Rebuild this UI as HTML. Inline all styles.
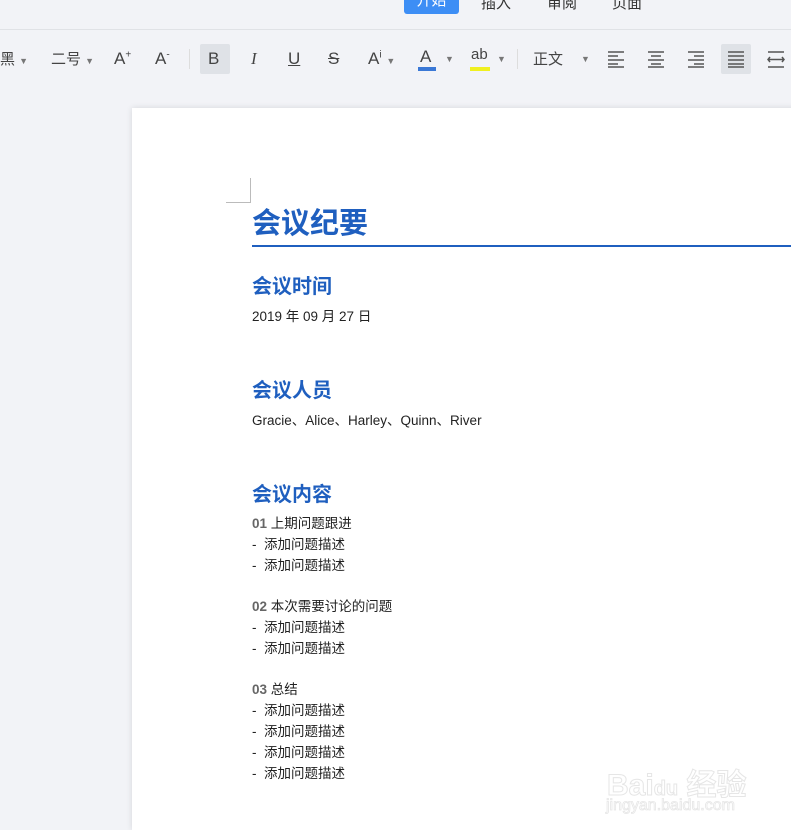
<!DOCTYPE html>
<html><head><meta charset="utf-8"><style>
*{margin:0;padding:0;box-sizing:border-box}
html,body{width:791px;height:830px;overflow:hidden}
body{background:#f2f3f7;position:relative;font-family:"Liberation Sans","Noto Sans CJK SC",sans-serif;color:#333}
.a{position:absolute;white-space:nowrap}
.tab{top:-8px;font-size:15px;color:#333}
.tb{top:44px;font-size:17px;color:#444}
.hl{background:#dfe2e7;border-radius:2px}
.page{position:absolute;left:132px;top:108px;width:700px;height:722px;background:#fff;box-shadow:0 0 6px rgba(0,0,0,.12)}
.h{color:#1f5fbf;font-weight:bold;font-size:20px}
.t{font-size:13.5px;color:#222}
.n{font-weight:bold;color:#666}
.car{font-size:9px;color:#777}
</style></head><body>
<div class="a" style="left:404px;top:-6px;width:55px;height:20px;background:#3d8ef5;border-radius:3px;color:#fff;font-size:15px;text-align:center;line-height:14px">开始</div>
<div class="a tab" style="left:481px">插入</div>
<div class="a tab" style="left:547px">审阅</div>
<div class="a tab" style="left:612px">页面</div>
<div class="a" style="left:0;top:29px;width:791px;height:1px;background:#e0e2e6"></div>

<div class="a tb" style="left:0;top:48px;font-size:15px">黑 <span class="car">▼</span></div>
<div class="a tb" style="left:51px;top:48px;font-size:15px">二号 <span class="car">▼</span></div>
<div class="a tb" style="left:114px;top:49px">A<sup style="font-size:10px">+</sup></div>
<div class="a tb" style="left:155px;top:49px">A<sup style="font-size:10px">-</sup></div>
<div class="a" style="left:189px;top:49px;width:1px;height:20px;background:#ddd"></div>
<div class="a hl" style="left:200px;top:44px;width:30px;height:30px"></div>
<div class="a tb" style="left:208px;top:49px">B</div>
<div class="a tb" style="left:251px;top:49px;font-style:italic;font-family:'Liberation Serif',serif">I</div>
<div class="a tb" style="left:288px;top:49px;text-decoration:underline">U</div>
<div class="a tb" style="left:328px;top:49px;text-decoration:line-through">S</div>
<div class="a tb" style="left:368px;top:49px">A<sup style="font-size:10px">i</sup> <span class="car">▼</span></div>
<div class="a tb" style="left:420px;top:47px">A</div>
<div class="a" style="left:418px;top:67px;width:18px;height:4px;background:#3a78d6"></div>
<div class="a car" style="left:445px;top:54px">▼</div>
<div class="a tb" style="left:471px;top:46px;font-size:15px">ab</div>
<div class="a" style="left:470px;top:67px;width:20px;height:4px;background:#f0f020"></div>
<div class="a car" style="left:497px;top:54px">▼</div>
<div class="a" style="left:517px;top:49px;width:1px;height:20px;background:#ddd"></div>
<div class="a tb" style="left:533px;top:48px;font-size:15px">正文</div>
<div class="a car" style="left:581px;top:54px">▼</div>
<svg class="a" style="left:607px;top:50px" width="18" height="18" stroke="#555" stroke-width="1.5"><path d="M1 2H17M1 6H11M1 10H17M1 14H11M1 17H17"/></svg>
<svg class="a" style="left:647px;top:50px" width="18" height="18" stroke="#555" stroke-width="1.5"><path d="M1 2H17M4 6H14M1 10H17M4 14H14M1 17H17"/></svg>
<svg class="a" style="left:687px;top:50px" width="18" height="18" stroke="#555" stroke-width="1.5"><path d="M1 2H17M7 6H17M1 10H17M7 14H17M1 17H17"/></svg>
<div class="a hl" style="left:721px;top:44px;width:30px;height:30px"></div>
<svg class="a" style="left:727px;top:50px" width="18" height="18" stroke="#555" stroke-width="1.5"><path d="M1 2H17M1 6H17M1 10H17M1 14H17M1 17H17"/></svg>
<svg class="a" style="left:767px;top:50px" width="18" height="18" stroke="#555" stroke-width="1.5" fill="none"><path d="M1 2H17M1 17H17M1 9.5H17M3 7L1 9.5L3 12M15 7L17 9.5L15 12"/></svg>

<div class="page"></div>
<div class="a" style="left:226px;top:178px;width:25px;height:25px;border-right:1px solid #bbb;border-bottom:1px solid #bbb"></div>
<div class="a h" style="left:252px;top:200px;font-size:29px">会议纪要</div>
<div class="a" style="left:252px;top:245px;width:540px;height:2px;background:#1f5fbf"></div>
<div class="a h" style="left:252px;top:270px">会议时间</div>
<div class="a t" style="left:252px;top:305px">2019 年 09 月 27 日</div>
<div class="a h" style="left:252px;top:374px">会议人员</div>
<div class="a t" style="left:252px;top:409px">Gracie、Alice、Harley、Quinn、River</div>
<div class="a h" style="left:252px;top:478px">会议内容</div>
<div class="a t" style="left:252px;top:514px;line-height:20.8px">
<span class="n">01</span> 上期问题跟进<br>-&nbsp; 添加问题描述<br>-&nbsp; 添加问题描述<br><br>
<span class="n">02</span> 本次需要讨论的问题<br>-&nbsp; 添加问题描述<br>-&nbsp; 添加问题描述<br><br>
<span class="n">03</span> 总结<br>-&nbsp; 添加问题描述<br>-&nbsp; 添加问题描述<br>-&nbsp; 添加问题描述<br>-&nbsp; 添加问题描述</div>

<div class="a" style="left:607px;top:760px;font-size:30px;color:#fff;-webkit-text-stroke:1px #e6e6e6;font-weight:bold">Bai<span style="font-size:20px">du</span> 经验</div>
<div class="a" style="left:606px;top:797px;font-size:16px;color:#fff;-webkit-text-stroke:.8px #e6e6e6">jingyan.baidu.com</div>
</body></html>
